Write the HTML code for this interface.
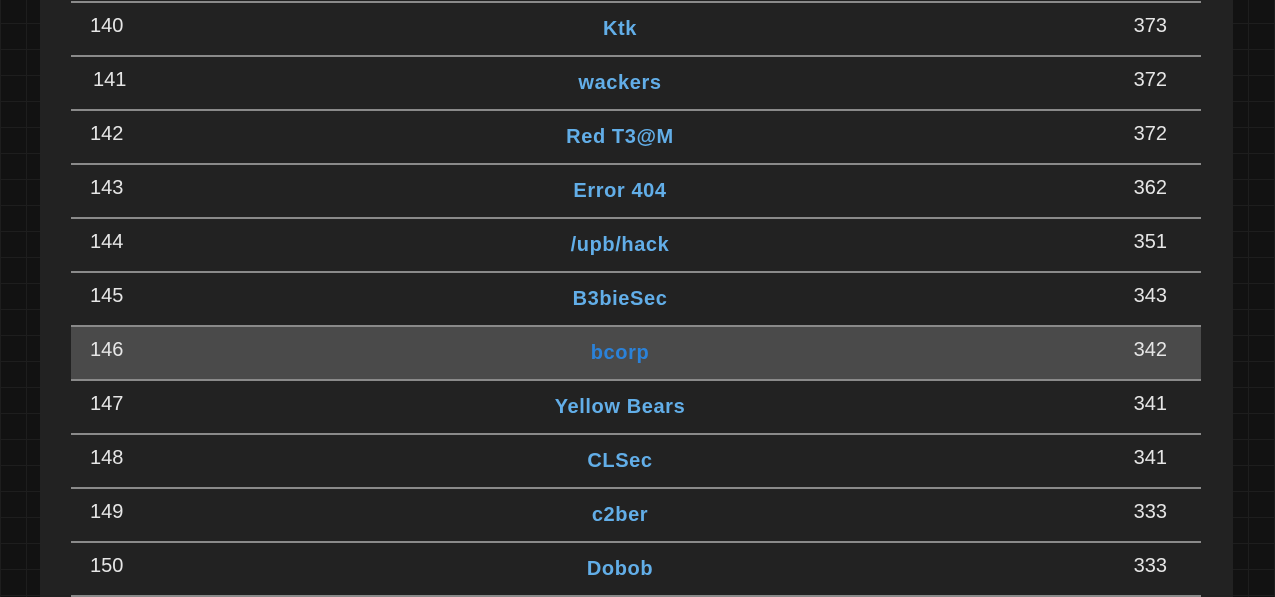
<!DOCTYPE html>
<html><head><style>
html,body{margin:0;padding:0;width:1275px;height:597px;overflow:hidden;
background-color:#121212;
background-image:linear-gradient(#1e1e1e 1px,transparent 1px),linear-gradient(90deg,#1e1e1e 1px,transparent 1px);
background-size:26px 26px;background-position:0 -3px;
font-family:"Liberation Sans",sans-serif;}
.panel{position:absolute;left:40px;top:0;width:1193px;height:597px;background:#222;}
.tbl{position:absolute;left:71px;top:1px;width:1130px;border-top:2px solid #8a8a8a;}
.row{position:relative;height:52px;border-bottom:2px solid #8a8a8a;color:#e6e6e6;}
.row.hl{background:#4a4a4a}
.n{position:absolute;left:19px;top:12px;font-size:20px;}
.s{position:absolute;right:34px;top:12px;font-size:20px;}
.t{position:absolute;left:0;right:32px;text-align:center;top:15px;font-size:20px;font-weight:bold;letter-spacing:0.6px;color:#62aee8;}
.hl .t{color:#2b82d9}
</style></head><body>
<div class="panel"></div>
<div class="tbl">
<div class="row"><span class="n">140</span><span class="t">Ktk</span><span class="s">373</span></div>
<div class="row"><span class="n" style="left:22px">141</span><span class="t">wackers</span><span class="s">372</span></div>
<div class="row"><span class="n">142</span><span class="t">Red T3@M</span><span class="s">372</span></div>
<div class="row"><span class="n">143</span><span class="t">Error 404</span><span class="s">362</span></div>
<div class="row"><span class="n">144</span><span class="t">/upb/hack</span><span class="s">351</span></div>
<div class="row"><span class="n">145</span><span class="t">B3bieSec</span><span class="s">343</span></div>
<div class="row hl"><span class="n">146</span><span class="t">bcorp</span><span class="s">342</span></div>
<div class="row"><span class="n">147</span><span class="t">Yellow Bears</span><span class="s">341</span></div>
<div class="row"><span class="n">148</span><span class="t">CLSec</span><span class="s">341</span></div>
<div class="row"><span class="n">149</span><span class="t">c2ber</span><span class="s">333</span></div>
<div class="row"><span class="n">150</span><span class="t">Dobob</span><span class="s">333</span></div>
</div>
</body></html>
